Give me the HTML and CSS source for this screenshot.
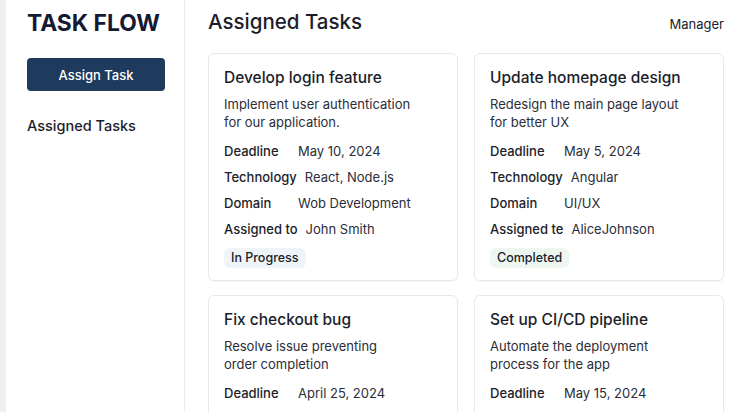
FILE: index.html
```html
<!DOCTYPE html>
<html>
<head>
<meta charset="utf-8">
<link rel="stylesheet" href="styles.css">
</head>
<body>
<div class="app">
  <aside class="sidebar">
    <h1 class="brand">TASK FLOW</h1>
    <button class="assign-btn">Assign Task</button>
    <a class="nav-link">Assigned Tasks</a>
  </aside>
  <main class="main">
    <header class="topbar">
      <h2 class="page-title">Assigned Tasks</h2>
      <span class="role">Manager</span>
    </header>
    <section class="grid">
      <article class="card">
        <h3 class="card-title">Develop login feature</h3>
        <p class="desc">Implement user authentication<br>for our application.</p>
        <div class="row"><span class="label">Deadline</span><span class="value">May 10, 2024</span></div>
        <div class="row"><span class="label">Technology</span><span class="value">React, Node.js</span></div>
        <div class="row"><span class="label">Domain</span><span class="value">Wob Development</span></div>
        <div class="row"><span class="label">Assigned to</span><span class="value">John Smith</span></div>
        <span class="badge progress">In Progress</span>
      </article>
      <article class="card">
        <h3 class="card-title">Update homepage design</h3>
        <p class="desc">Redesign the main page layout<br>for better UX</p>
        <div class="row"><span class="label">Deadline</span><span class="value">May 5, 2024</span></div>
        <div class="row"><span class="label">Technology</span><span class="value">Angular</span></div>
        <div class="row"><span class="label">Domain</span><span class="value">UI/UX</span></div>
        <div class="row"><span class="label">Assigned te</span><span class="value">AliceJohnson</span></div>
        <span class="badge done">Completed</span>
      </article>
      <article class="card">
        <h3 class="card-title">Fix checkout bug</h3>
        <p class="desc">Resolve issue preventing<br>order completion</p>
        <div class="row"><span class="label">Deadline</span><span class="value">April 25, 2024</span></div>
        <div class="row"><span class="label">Technology</span><span class="value">Vue.js</span></div>
        <div class="row"><span class="label">Domain</span><span class="value">E-commerce</span></div>
        <div class="row"><span class="label">Assigned to</span><span class="value">Bob Lee</span></div>
        <span class="badge progress">In Progress</span>
      </article>
      <article class="card">
        <h3 class="card-title">Set up CI/CD pipeline</h3>
        <p class="desc">Automate the deployment<br>process for the app</p>
        <div class="row"><span class="label">Deadline</span><span class="value">May 15, 2024</span></div>
        <div class="row"><span class="label">Technology</span><span class="value">Docker</span></div>
        <div class="row"><span class="label">Domain</span><span class="value">DevOps</span></div>
        <div class="row"><span class="label">Assigned to</span><span class="value">Jane Doe</span></div>
        <span class="badge progress">In Progress</span>
      </article>
    </section>
  </main>
</div>
</body>
</html>
```

FILE: styles.css
```css
* { box-sizing: border-box; }
html, body { margin: 0; padding: 0; height: 100%; }
body {
  font-family: Inter, "Noto Sans", sans-serif;
  color: #1b1d2a;
  background: #ffffff;
  overflow: hidden;
}
.app {
  display: flex;
  height: 412px;
  border-left: 6px solid #efefef;
}
.sidebar {
  width: 179px;
  flex: none;
  border-right: 1px solid #ececec;
  padding: 8px 0 0 21px;
  display: flex;
  flex-direction: column;
  align-items: flex-start;
}
.brand {
  margin: 0;
  font-size: 22.8px;
  font-weight: 700;
  line-height: 30px;
  color: #141a33;
}
.assign-btn {
  margin-top: 20px;
  width: 138px;
  height: 33px;
  border: none;
  border-radius: 4px;
  background: #1e3a5c;
  color: #ffffff;
  font-family: inherit;
  font-size: 13px;
  font-weight: 500;
}
.nav-link {
  margin-top: 26px;
  font-size: 14.5px;
  font-weight: 500;
  color: #1b1d2a;
}
.main {
  flex: 1;
  padding: 7px 8px 0 23px;
}
.topbar {
  display: flex;
  justify-content: space-between;
  align-items: baseline;
  height: 30px;
  margin-bottom: 16px;
}
.page-title {
  margin: 0;
  font-size: 20.5px;
  font-weight: 500;
  line-height: 30px;
}
.role {
  font-size: 13px;
  color: #1b1d2a;
}
.grid {
  display: grid;
  grid-template-columns: 1fr 1fr;
  gap: 14px 16px;
}
.card {
  border: 1px solid #e8e8e8;
  border-radius: 6px;
  padding: 13px 15px 12px 15px;
  box-shadow: 0 1px 2px rgba(0,0,0,0.04);
}
.card-title {
  margin: 0;
  font-size: 15.5px;
  font-weight: 500;
  line-height: 22px;
}
.desc {
  margin: 6px 0 7px;
  font-size: 13px;
  line-height: 18px;
  color: #2b2d38;
}
.row {
  display: flex;
  align-items: center;
  height: 26px;
  font-size: 13px;
}
.label {
  min-width: 66px;
  margin-right: 8px;
  font-weight: 500;
  color: #1b1d2a;
}
.value {
  color: #2b2d38;
}
.badge {
  display: inline-block;
  margin-top: 6px;
  height: 20px;
  line-height: 20px;
  padding: 0 7px;
  border-radius: 6px;
  font-size: 12.5px;
  font-weight: 500;
}
.badge.progress { background: #eef4f8; }
.badge.done { background: #edf7ef; }
```
